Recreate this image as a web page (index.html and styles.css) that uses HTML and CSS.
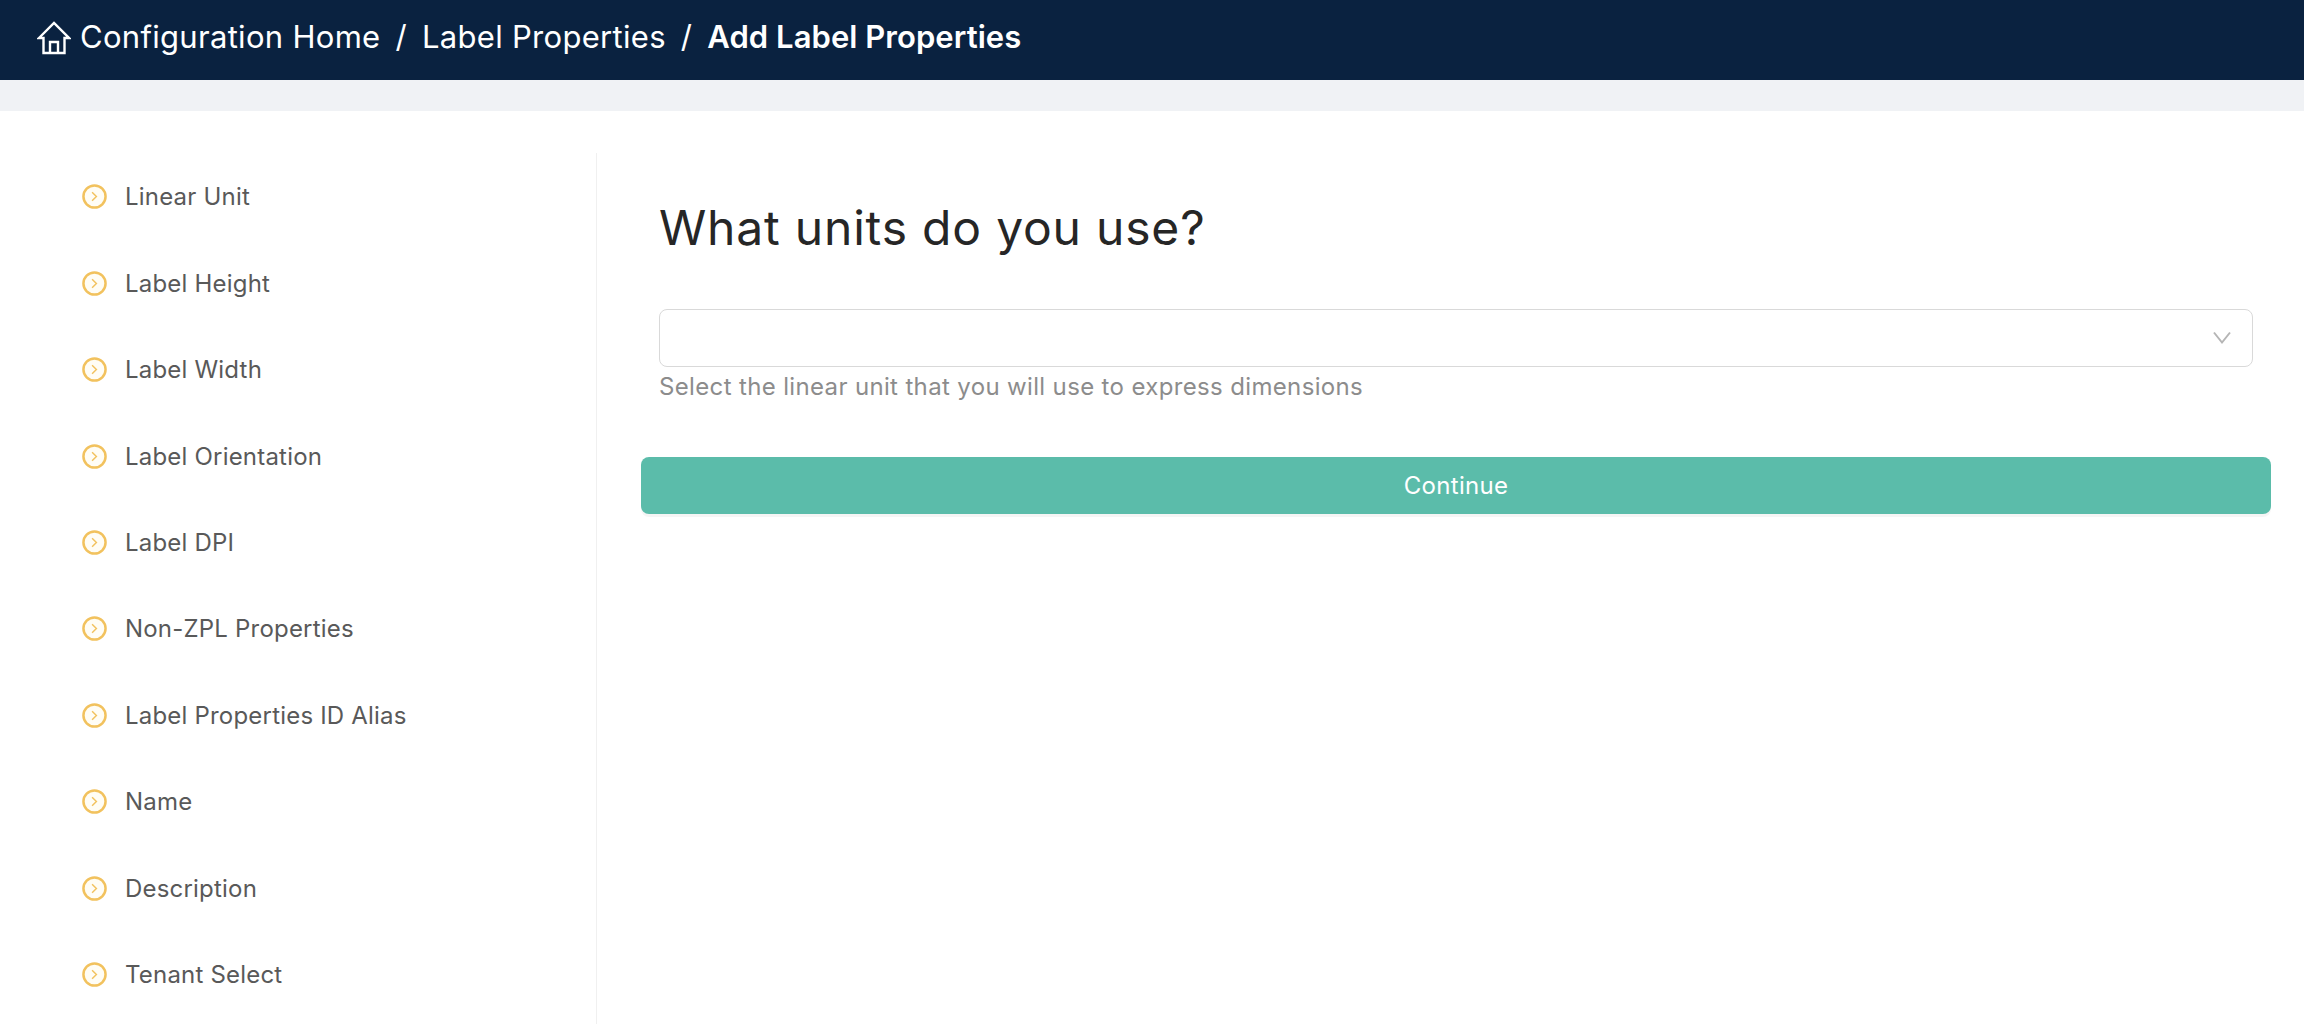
FILE: index.html
```html
<!DOCTYPE html>
<html lang="en">
<head>
<meta charset="utf-8">
<title>Add Label Properties</title>
<link rel="stylesheet" href="styles.css">
</head>
<body>
<header class="topbar">
  <svg class="home" viewBox="0 0 34 34" fill="none" stroke="#fff" stroke-width="2.4" stroke-linejoin="miter"><path d="M2 17 17 2l15 15h-4.500v15H6.500V17z"/><path d="M13 32V21h8v11"/></svg>
  <span class="crumb">Configuration Home</span><span class="sep">/</span>
  <span class="crumb">Label Properties</span><span class="sep">/</span>
  <span class="crumb current">Add Label Properties</span>
</header>
<div class="strip"></div>
<main class="layout">
  <nav class="steps">
    <div class="step"><svg class="dot" viewBox="0 0 26 26"><circle cx="13" cy="13" r="11.500"/><path d="m10.500 8.500 4.500 4.500-4.500 4.500"/></svg><span>Linear Unit</span></div>
    <div class="step"><svg class="dot" viewBox="0 0 26 26"><circle cx="13" cy="13" r="11.500"/><path d="m10.500 8.500 4.500 4.500-4.500 4.500"/></svg><span>Label Height</span></div>
    <div class="step"><svg class="dot" viewBox="0 0 26 26"><circle cx="13" cy="13" r="11.500"/><path d="m10.500 8.500 4.500 4.500-4.500 4.500"/></svg><span>Label Width</span></div>
    <div class="step"><svg class="dot" viewBox="0 0 26 26"><circle cx="13" cy="13" r="11.500"/><path d="m10.500 8.500 4.500 4.500-4.500 4.500"/></svg><span>Label Orientation</span></div>
    <div class="step"><svg class="dot" viewBox="0 0 26 26"><circle cx="13" cy="13" r="11.500"/><path d="m10.500 8.500 4.500 4.500-4.500 4.500"/></svg><span>Label DPI</span></div>
    <div class="step"><svg class="dot" viewBox="0 0 26 26"><circle cx="13" cy="13" r="11.500"/><path d="m10.500 8.500 4.500 4.500-4.500 4.500"/></svg><span>Non-ZPL Properties</span></div>
    <div class="step"><svg class="dot" viewBox="0 0 26 26"><circle cx="13" cy="13" r="11.500"/><path d="m10.500 8.500 4.500 4.500-4.500 4.500"/></svg><span>Label Properties ID Alias</span></div>
    <div class="step"><svg class="dot" viewBox="0 0 26 26"><circle cx="13" cy="13" r="11.500"/><path d="m10.500 8.500 4.500 4.500-4.500 4.500"/></svg><span>Name</span></div>
    <div class="step"><svg class="dot" viewBox="0 0 26 26"><circle cx="13" cy="13" r="11.500"/><path d="m10.500 8.500 4.500 4.500-4.500 4.500"/></svg><span>Description</span></div>
    <div class="step"><svg class="dot" viewBox="0 0 26 26"><circle cx="13" cy="13" r="11.500"/><path d="m10.500 8.500 4.500 4.500-4.500 4.500"/></svg><span>Tenant Select</span></div>
  </nav>
  <section class="content">
    <h1 class="title">What units do you use?</h1>
    <div class="field">
      <div class="select"><svg class="chev" viewBox="0 0 18 14" fill="none" stroke="#b5b5b5" stroke-width="2"><path d="m1 1.500 8 10 8-10"/></svg></div>
      <p class="help">Select the linear unit that you will use to express dimensions</p>
    </div>
    <button class="continue" type="button">Continue</button>
  </section>
</main>
</body>
</html>
```
FILE: styles.css
```css
* { box-sizing: border-box; }
html, body { margin: 0; background: #fff; }
body { font-family: "Inter", "Open Sans", sans-serif; height: 1036px; overflow: hidden; }
.topbar { height: 80px; background: #0a2240; color: #fff; display: flex; align-items: center; padding: 0 0 7px 37px; font-size: 31px; letter-spacing: .3px; }
.home { width: 34px; height: 34px; margin-right: 9px; flex: none; margin-top: 2px; }
.sep { margin: 0 15px; }
.current { font-weight: 600; letter-spacing: .05px; }
.strip { height: 31px; background: #f0f2f5; }
.layout { display: flex; padding-top: 42px; height: 913px; }
.steps { width: 597px; height: 871px; border-right: 1px solid #f0f0f0; padding: .5px 0 0 82px; display: flex; flex-direction: column; }
.step { height: 86.450px; flex: none; display: flex; align-items: center; gap: 18px; font-size: 24px; letter-spacing: .2px; color: #595959; }
.dot { width: 25px; height: 25px; flex: none; fill: #fffdf5; stroke: #f2c25e; stroke-width: 2.600; }
.dot path { fill: none; stroke-width: 1.500; }
.content { flex: 1; padding: 0 33px 0 44px; display: flex; flex-direction: column; }
.title { margin: 42px 0 0 18px; font-size: 48px; line-height: 66px; font-weight: 400; letter-spacing: .8px; color: #262626; }
.field { margin: 48px 18px 0; }
.select { height: 58px; border: 1.500px solid #d9d9d9; border-radius: 8px; display: flex; align-items: center; justify-content: flex-end; padding-right: 21px; }
.chev { width: 18px; height: 14px; }
.help { margin: 3px 0 0; font-size: 24px; line-height: 34px; letter-spacing: .35px; color: #8c8c8c; }
.continue { margin-top: 53px; height: 57px; border: 0; border-radius: 8px; background: #5bbcaa; color: #fff; font: 24px "Inter", sans-serif; letter-spacing: .3px; box-shadow: 0 3px 0 rgba(0,0,0,.04); }
```
